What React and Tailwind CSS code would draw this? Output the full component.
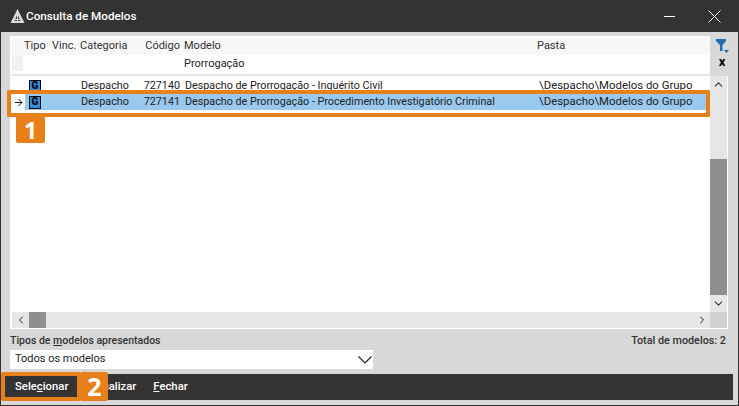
import React from "react";
import { ChevronDown, ChevronLeft, ChevronRight, ChevronUp } from "lucide-react";

const font = { fontFamily: 'Roboto, "Noto Sans", sans-serif' };
const callout = { fontFamily: '"Noto Sans", sans-serif' };

const TypeIcon = () => (
  <div className="flex h-[13px] w-[12px] items-center justify-center border border-black bg-[#2f8fe0] text-[10px] font-black leading-none text-black">
    G
  </div>
);

const Row = ({ code, name, selected }) => (
  <div className="flex h-[16px] items-center whitespace-nowrap text-[10.75px]">
    <div className="flex h-full w-[13px] items-center justify-center pl-[1px]">
      {selected && (
        <svg width="8" height="9" viewBox="0 0 8 9" fill="none" stroke="#111" strokeWidth="1">
          <path d="M0 4.5h7M3.5 1l3.5 3.5L3.5 8" />
        </svg>
      )}
    </div>
    <div className={`flex h-full flex-1 items-center pl-[4px] ${selected ? "bg-[#99c9ef]" : ""}`}>
      <TypeIcon />
      <span className="ml-[40px] w-[57px]">Despacho</span>
      <span className="w-[42px] text-right">{code}</span>
      <span className="ml-[5px] w-[354px]">{name}</span>
      <span className="text-[11.4px]">\Despacho\Modelos do Grupo</span>
    </div>
  </div>
);

export default function App() {
  return (
    <div className="relative flex h-[406px] w-[739px] flex-col overflow-hidden border-x border-b border-[#333] bg-[#d8d8d8] text-[11px] text-[#222]" style={font}>
      <header className="flex h-[32px] shrink-0 items-center bg-[#333] pl-[8px] text-white">
        <svg width="17" height="17" viewBox="0 0 17 17" fill="#ddd">
          <path d="M8.5 1 L15.5 15 H1.5 Z M8.5 6 L5.5 13 H11.5 Z" fillRule="evenodd" />
          <path d="M8 6h1v8H8zM4 11h9v1H4z" />
        </svg>
        <span className="mt-[2px] text-[11.7px] font-medium">Consulta de Modelos</span>
        <div className="ml-auto flex items-center">
          <div className="h-[1px] w-[11px] bg-white" />
          <svg className="ml-[33px] mr-[17px]" width="13" height="13" viewBox="0 0 13 13" stroke="white" strokeWidth="1">
            <path d="M0.5 0.5 L12.5 12.5 M12.5 0.5 L0.5 12.5" />
          </svg>
        </div>
      </header>

      <div className="flex flex-col pl-[9px] pt-[4px]">
        <div className="relative h-[293px] w-[718px] bg-white pt-[1px]">
          <div className="ml-[2px] mr-[16px]">
            {/* header + filter rows */}
            <div className="grid h-[18px] grid-cols-[12px_28px_28px_56px_44px_4px_353px_1fr] items-center whitespace-nowrap bg-[#f7f7f7] text-[#333]">
              <div />
              <span>Tipo</span>
              <span>Vinc.</span>
              <span>Categoria</span>
              <span className="text-right">Código</span>
              <div />
              <span>Modelo</span>
              <span>Pasta</span>
            </div>
            <div className="flex h-[19px] bg-white">
              <div className="h-[16px] w-[11px] bg-[#f1f1f1]" />
              <span className="ml-[161px] mt-[1px]">Prorrogação</span>
            </div>
            <div className="h-[2px] bg-[#e6e6e6]" />
            <div className="mr-[2px] pt-[2px]">
              <Row code="727140" name="Despacho de Prorrogação - Inquérito Civil" />
              <Row code="727141" name="Despacho de Prorrogação - Procedimento Investigatório Criminal" selected />
            </div>
          </div>

          {/* side strip: filter buttons + vertical scrollbar */}
          <div className="absolute right-0 top-0 flex h-full w-[18px] flex-col bg-white">
            <div className="flex h-[40px] flex-col items-center bg-[#d8d8d8] pl-[6px]">
              <svg className="mt-[3px]" width="13" height="15" viewBox="0 0 13 15" fill="#1a6fb5">
                <path d="M0 0h10v2L6.5 6v6H4V6L0 2zM8 11h5l-2.5 3z" />
              </svg>
              <span className="mt-[1px] text-[13px] font-bold leading-none text-black">x</span>
            </div>
            <div className="mr-[1px] flex h-[16px] items-center justify-center bg-[#e6e6e6]"><ChevronUp size={13} color="#333" /></div>
            <div className="mr-[1px] h-[67px] bg-[#e6e6e6]" />
            <div className="mr-[1px] h-[136px] bg-[#8f8f8f]" />
            <div className="mr-[1px] flex h-[17px] items-center justify-center bg-[#e6e6e6]"><ChevronDown size={13} color="#333" /></div>
            <div className="mr-[1px] h-[16px] bg-[#d0d0d0]" />
          </div>

          {/* horizontal scrollbar */}
          <div className="absolute bottom-[1px] left-[2px] flex h-[16px] w-[698px] items-center bg-[#e6e6e6]">
            <div className="flex w-[17px] justify-center"><ChevronLeft size={12} color="#222" /></div>
            <div className="h-full w-[17px] bg-[#8f8f8f]" />
            <div className="ml-auto flex w-[17px] justify-center"><ChevronRight size={12} color="#222" /></div>
          </div>
        </div>

        <div className="mt-[4px] flex h-[16px] items-center justify-between pr-[12px] font-medium text-[#333]">
          <span className="text-[10.5px]">Tipos de <u>m</u>odelos apresentados</span>
          <span className="text-[10.8px]">Total de modelos: 2</span>
        </div>
        <div className="mt-[1px] flex h-[19px] w-[363px] items-center justify-between bg-white pl-[5px] pr-[1px]">
          <span>Todos os modelos</span>
          <svg width="14" height="8" viewBox="0 0 14 8" fill="none" stroke="#222" strokeWidth="1.2">
            <path d="M0.5 0.5L7 7L13.5 0.5" />
          </svg>
        </div>
      </div>

      <footer className="mt-[5px] flex h-[26px] w-[732px] shrink-0 items-center bg-[#333] text-[11.3px] font-medium text-white">
        <span className="ml-[14px]">Sele<u>c</u>ionar</span>
        <span className="ml-[18px]">Visualizar</span>
        <span className="ml-[17px]"><u>F</u>echar</span>
      </footer>

      {/* orange callouts */}
      <div className="absolute left-[6px] top-[90px] h-[27px] w-[703px] rounded-[1px] border-[4px] border-[#e8801a]" />
      <div className="absolute left-[15px] top-[117px] flex h-[26px] w-[29px] items-center justify-center rounded-b-[2px] bg-[#e8801a] text-[23px] font-bold text-white" style={callout}>1</div>
      <div className="absolute left-[0px] top-[372px] h-[29px] w-[80px] rounded-[2px] border-[4px] border-[#e8801a]" />
      <div className="absolute left-[80px] top-[372px] flex h-[29px] w-[27px] items-center justify-center rounded-r-[2px] bg-[#e8801a] text-[25px] font-bold text-white" style={callout}>2</div>
    </div>
  );
}
